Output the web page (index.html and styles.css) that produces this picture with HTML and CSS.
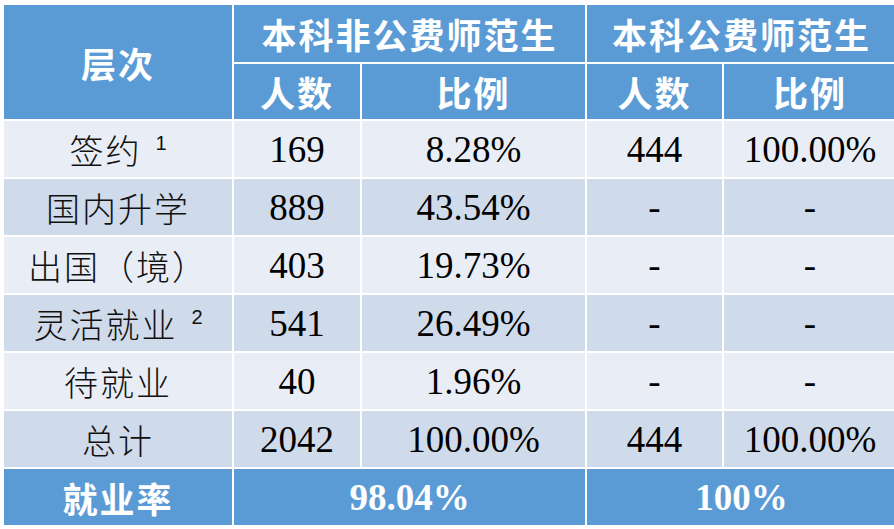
FILE: index.html
```html
<!DOCTYPE html>
<html lang="zh-CN">
<head>
<meta charset="utf-8">
<title>就业率</title>
<link rel="stylesheet" href="styles.css">
</head>
<body>
<div class="table">
  <div class="cell head span-r2">层次</div>
  <div class="cell head span-c2">本科非公费师范生</div>
  <div class="cell head span-c2">本科公费师范生</div>
  <div class="cell head">人数</div>
  <div class="cell head">比例</div>
  <div class="cell head">人数</div>
  <div class="cell head">比例</div>

  <div class="cell light cn">签约<sup>1</sup></div>
  <div class="cell light num">169</div>
  <div class="cell light num">8.28%</div>
  <div class="cell light num">444</div>
  <div class="cell light num">100.00%</div>

  <div class="cell dark cn">国内升学</div>
  <div class="cell dark num">889</div>
  <div class="cell dark num">43.54%</div>
  <div class="cell dark num">-</div>
  <div class="cell dark num">-</div>

  <div class="cell light cn">出国（境）</div>
  <div class="cell light num">403</div>
  <div class="cell light num">19.73%</div>
  <div class="cell light num">-</div>
  <div class="cell light num">-</div>

  <div class="cell dark cn">灵活就业<sup>2</sup></div>
  <div class="cell dark num">541</div>
  <div class="cell dark num">26.49%</div>
  <div class="cell dark num">-</div>
  <div class="cell dark num">-</div>

  <div class="cell light cn">待就业</div>
  <div class="cell light num">40</div>
  <div class="cell light num">1.96%</div>
  <div class="cell light num">-</div>
  <div class="cell light num">-</div>

  <div class="cell dark cn">总计</div>
  <div class="cell dark num">2042</div>
  <div class="cell dark num">100.00%</div>
  <div class="cell dark num">444</div>
  <div class="cell dark num">100.00%</div>

  <div class="cell head">就业率</div>
  <div class="cell head foot-num span-c2">98.04%</div>
  <div class="cell head foot-num span-c2">100%</div>
</div>
</body>
</html>
```
FILE: styles.css
```css
html, body {
  margin: 0;
  padding: 0;
  background: #ffffff;
  overflow: hidden;
}
body {
  padding: 5px 0 0 4px;
  width: 894px;
  height: 529px;
  box-sizing: border-box;
}
.table {
  display: grid;
  grid-template-columns: 228px 126px 223px 135px 172px;
  grid-template-rows: 57px 55px repeat(7, 56px);
  gap: 2px;
  background: #ffffff;
  width: max-content;
}
.cell {
  display: flex;
  align-items: center;
  justify-content: center;
  white-space: nowrap;
}
.span-r2 { grid-row: span 2; }
.span-c2 { grid-column: span 2; }
.head {
  background: #5b9bd5;
  color: #ffffff;
  font-family: "Noto Sans CJK SC", sans-serif;
  font-weight: 700;
  font-size: 35px;
  letter-spacing: 2px;
}
.light { background: #e9edf5; }
.dark { background: #cfdaea; }
.cn {
  font-family: "Noto Sans CJK SC", sans-serif;
  font-size: 34px;
  font-weight: 300;
  letter-spacing: 2px;
  color: #111111;
}
.num {
  font-family: "Liberation Serif", "Times New Roman", serif;
  font-size: 37px;
  color: #000000;
}
.foot-num {
  font-family: "Liberation Serif", "Times New Roman", serif;
  font-size: 37px;
  letter-spacing: 0;
}
sup {
  font-family: "Liberation Sans", Arial, sans-serif;
  font-size: 20px;
  font-weight: 400;
  margin-left: 14px;
  position: relative;
  top: -6px;
  vertical-align: top;
  letter-spacing: 0;
}
```
